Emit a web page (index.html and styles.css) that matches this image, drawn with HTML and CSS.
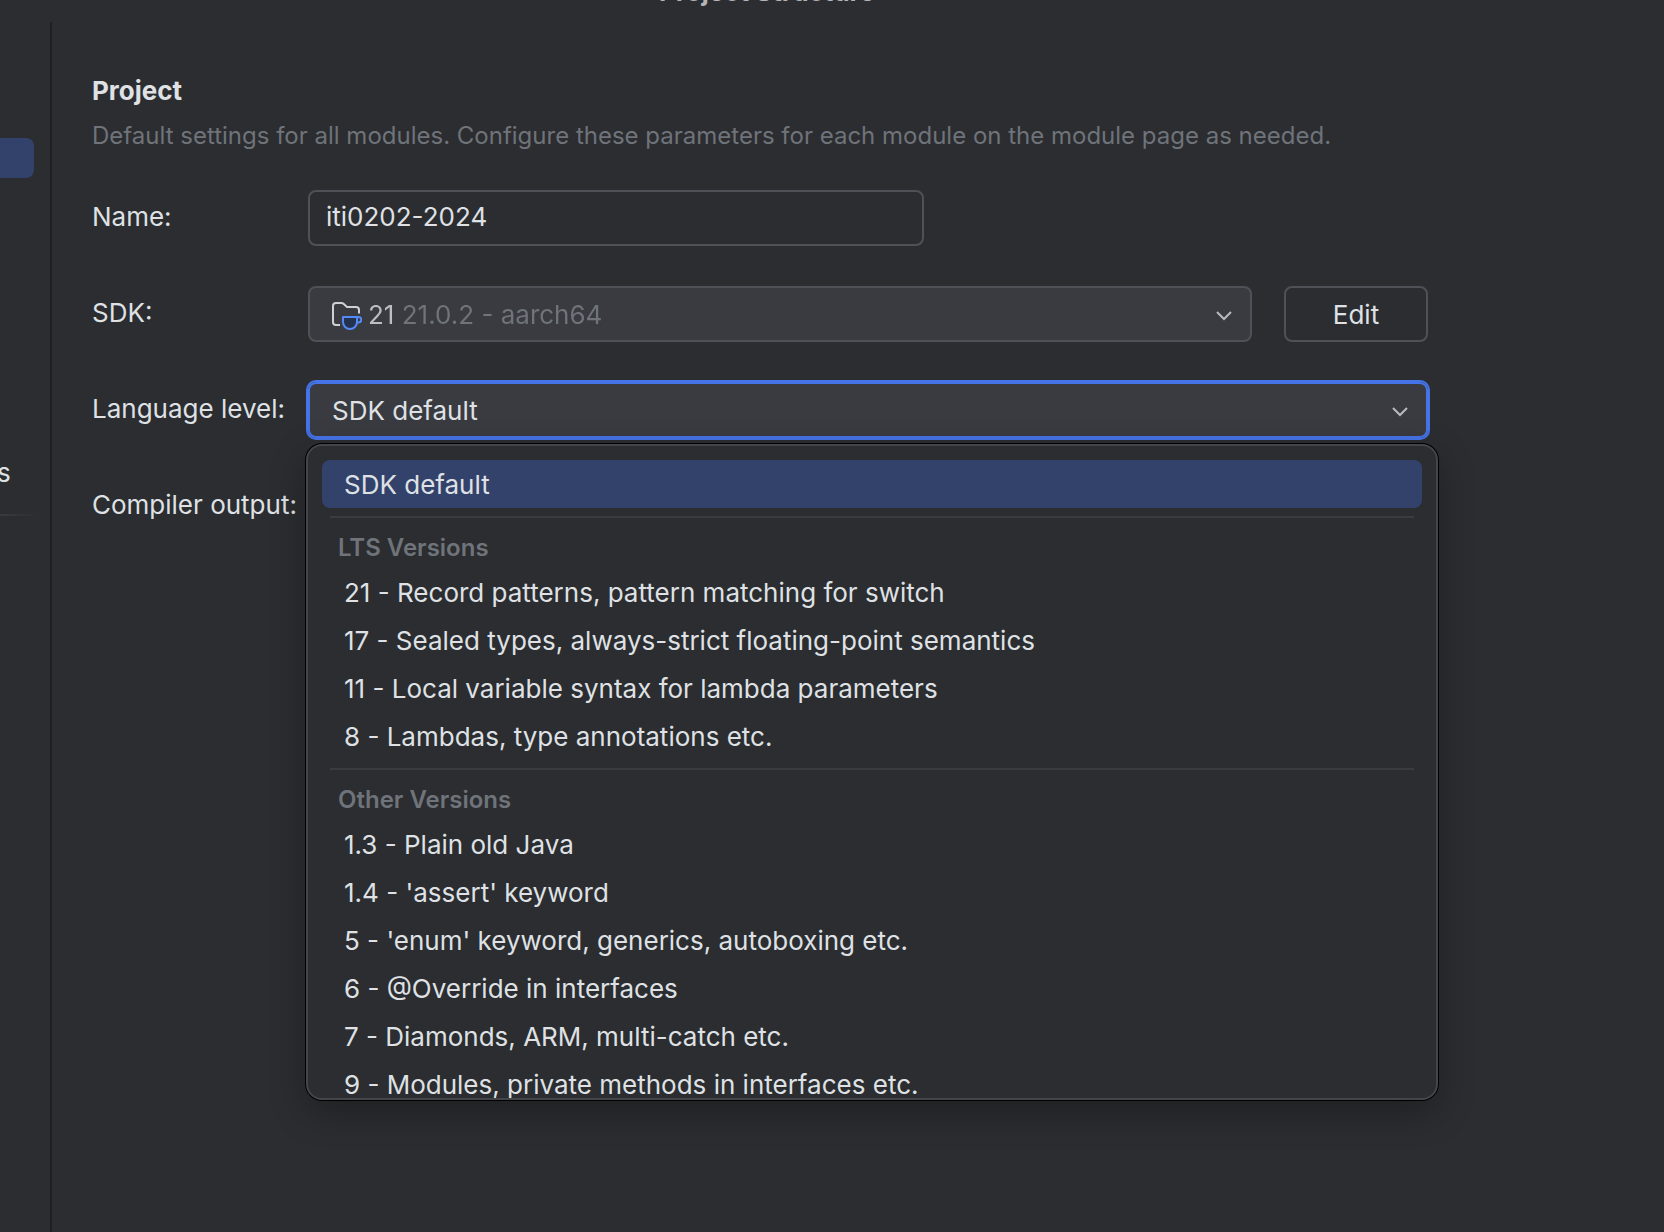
FILE: index.html
```html
<!DOCTYPE html>
<html lang="en">
<head>
<meta charset="utf-8">
<title>Project Structure</title>
<link rel="stylesheet" href="styles.css">
</head>
<body>
<header class="titlebar"><span class="titlebar-text">Project Structure</span></header>
<div class="window">
  <nav class="sidebar">
    <div class="nav-selected"></div>
    <div class="nav-item">s</div>
    <div class="nav-separator"></div>
  </nav>
  <main class="page">
    <h1 class="page-title">Project</h1>
    <p class="page-hint">Default settings for all modules. Configure these parameters for each module on the module page as needed.</p>
    <form class="form">
      <div class="row">
        <label class="label" for="name">Name:</label>
        <input class="field field-name" id="name" type="text" value="iti0202-2024">
      </div>
      <div class="row">
        <label class="label" for="sdk">SDK:</label>
        <div class="combo">
          <svg class="sdk-icon" viewBox="0 0 32 32" aria-hidden="true">
            <path d="M10 27H6a3 3 0 0 1-3-3V8a3 3 0 0 1 3-3h5.500a3 3 0 0 1 2 .8L17 9h9a3 3 0 0 1 3 3v3.500" fill="none" stroke="#ced0d6" stroke-width="2"/>
            <path d="M13 19h14v5a7 7 0 0 1-14 0z" fill="#25324d" stroke="#548af7" stroke-width="2" stroke-linejoin="round"/>
            <path d="M27 19h1.500a2.500 2.500 0 0 1 0 5.500H27" fill="none" stroke="#548af7" stroke-width="2"/>
          </svg>
          <select class="select select-sdk" id="sdk"><option>21 21.0.2 - aarch64</option></select>
          <svg class="chevron" viewBox="0 0 16 10" aria-hidden="true"><path d="M1 1l7 7 7-7"/></svg>
        </div>
        <button class="button" type="button">Edit</button>
      </div>
      <div class="row">
        <label class="label" for="level">Language level:</label>
        <div class="combo combo-open">
          <select class="select" id="level"><option>SDK default</option></select>
          <svg class="chevron" viewBox="0 0 16 10" aria-hidden="true"><path d="M1 1l7 7 7-7"/></svg>
          <div class="popup" role="listbox" aria-label="Language level">
            <div class="option option-selected" role="option" aria-selected="true">SDK default</div>
            <div class="group" role="group" aria-labelledby="lts">
              <div class="group-title" id="lts">LTS Versions</div>
              <div class="option" role="option">21 - Record patterns, pattern matching for switch</div>
              <div class="option" role="option">17 - Sealed types, always-strict floating-point semantics</div>
              <div class="option" role="option">11 - Local variable syntax for lambda parameters</div>
              <div class="option" role="option">8 - Lambdas, type annotations etc.</div>
            </div>
            <div class="group" role="group" aria-labelledby="other">
              <div class="group-title" id="other">Other Versions</div>
              <div class="option" role="option">1.3 - Plain old Java</div>
              <div class="option" role="option">1.4 - 'assert' keyword</div>
              <div class="option" role="option">5 - 'enum' keyword, generics, autoboxing etc.</div>
              <div class="option" role="option">6 - @Override in interfaces</div>
              <div class="option" role="option">7 - Diamonds, ARM, multi-catch etc.</div>
              <div class="option" role="option">9 - Modules, private methods in interfaces etc.</div>
            </div>
          </div>
        </div>
      </div>
      <div class="row">
        <label class="label" for="output">Compiler output:</label>
        <input class="field" id="output" type="text">
      </div>
    </form>
  </main>
</div>
</body>
</html>
```
FILE: styles.css
```css
* {
  box-sizing: border-box;
}

body {
  margin: 0;
  min-height: 100vh;
  display: flex;
  flex-direction: column;
  background: #2b2d30;
  color: #dfe1e5;
  font: 26px/32px Inter, "Noto Sans", sans-serif;
}

.titlebar {
  height: 22px;
  padding-left: 659px;
  overflow: hidden;
}

.titlebar-text {
  display: block;
  margin-top: -24px;
  color: #b4b5b8;
  font-weight: 700;
}

.window {
  flex: 1;
  display: flex;
}

/* Sidebar */
.sidebar {
  flex: none;
  width: 52px;
  padding-top: 116px;
  border-right: 2px solid #1e1f22;
}

.nav-selected {
  height: 40px;
  margin-right: 16px;
  border-radius: 0 8px 8px 0;
  background: #33426a;
}

.nav-item {
  margin-top: 279px;
  margin-left: -3px;
}

.nav-separator {
  height: 2px;
  margin: 25px 12px 0 0;
  background: linear-gradient(90deg, #393b40, #2b2d30);
}

/* Project page */
.page {
  flex: 1;
  min-width: 0;
  padding: 53px 40px;
}

.page-title {
  margin: 0;
  font-size: 26px;
  font-weight: 700;
}

.page-hint {
  margin: 13px 0 38px;
  color: #6f737a;
  font-size: 24px;
}

.form {
  display: flex;
  flex-direction: column;
  gap: 40px;
  max-width: 1336px;
}

.row {
  display: flex;
  align-items: center;
  height: 56px;
}

.label {
  flex: none;
  width: 216px;
  padding-bottom: 2px;
}

.field,
.button {
  height: 56px;
  border: 2px solid #4e5157;
  border-radius: 8px;
  background: #2b2d30;
  color: inherit;
  font: inherit;
}

.field {
  flex: 1;
  min-width: 0;
  padding: 0 16px 4px;
}

.field-name {
  max-width: 616px;
}

.button {
  width: 144px;
  margin-left: 32px;
  padding: 2px 0 0;
}

.combo {
  position: relative;
  flex: 1;
  height: 56px;
  border: 2px solid #4e5157;
  border-radius: 8px;
  background: #393b40;
}

.combo-open {
  border-color: #4573e8;
  outline: 2px solid #4573e8;
}

.select {
  width: 100%;
  height: 100%;
  padding: 2px 48px 0 22px;
  border: 0;
  outline: 0;
  appearance: none;
  background: none;
  color: inherit;
  font: inherit;
}

/* Version name is brighter than the build details after it */
.select-sdk {
  padding-left: 58px;
  background: linear-gradient(90deg, #bcbec4 91px, #6f737a 91px);
  background-clip: text;
  color: transparent;
}

.sdk-icon {
  position: absolute;
  left: 20px;
  top: 10px;
  width: 32px;
  height: 32px;
}

.chevron {
  position: absolute;
  right: 18px;
  top: 23px;
  width: 16px;
  height: 10px;
  fill: none;
  stroke: #b8babf;
  stroke-width: 2;
  pointer-events: none;
}

/* Drop-down list */
.popup {
  position: absolute;
  z-index: 1;
  top: 60px;
  left: -4px;
  right: -12px;
  height: 656px;
  padding: 14px;
  overflow: hidden;
  border: 2px solid #43454a;
  border-radius: 16px;
  background: #2b2d30;
  box-shadow: 0 0 0 1px #000, 0 12px 36px rgba(0, 0, 0, 0.3);
}

.option {
  height: 48px;
  padding: 9px 22px 7px;
  border-radius: 8px;
  white-space: nowrap;
}

.option-selected {
  background: #33426a;
}

.group::before {
  content: "";
  display: block;
  height: 2px;
  margin: 8px 8px 0;
  background: #393b40;
}

.group-title {
  padding: 10px 16px 0;
  color: #6f737a;
  font-size: 24px;
  font-weight: 600;
  line-height: 40px;
}
```
